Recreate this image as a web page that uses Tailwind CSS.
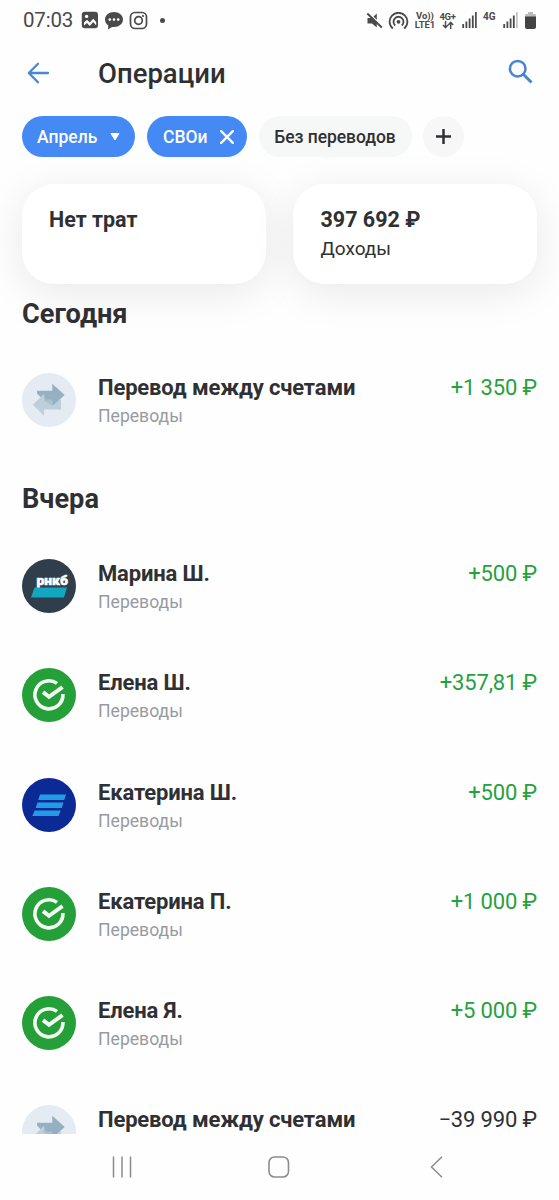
<!DOCTYPE html>
<html lang="ru">
<head>
<meta charset="utf-8">
<title>Операции</title>
<script src="https://cdn.jsdelivr.net/npm/@tailwindcss/browser@4"></script>
</head>
<body class="bg-[#fefefe] font-['Roboto',sans-serif] text-[#2f3033]">
<svg class="hidden">
  <symbol id="transfer" viewBox="0 0 54 54">
    <circle cx="27" cy="27" r="27" fill="#e4ebf3"/>
    <path d="M10.800 31.700L22 21V26.500H39V36.500H22V42.700Z" fill="#bccfda"/>
    <path d="M15 17.700H30.300V10.700L42.700 22L30.300 33V28H22V21L18.500 24.300L15 20.500Z" fill="#94b0c1"/>
    <path d="M22 21.500L24 26.500H30.300V33L24 28.500H22Z" fill="#a9c0cd"/>
  </symbol>
  <symbol id="sber" viewBox="0 0 54 54">
    <circle cx="27" cy="27" r="27" fill="#259f38"/>
    <path d="M35 15.400A14 14 0 1 0 40.900 26" fill="none" stroke="#f2fff2" stroke-width="3.600"/>
    <path d="M21 24.200L27 28.800L40.500 19.200" fill="none" stroke="#f2fff2" stroke-width="4"/>
  </symbol>
  <symbol id="signal" viewBox="0 0 15 16">
    <path d="M1.200 12v4M4.400 9.500V16M7.600 6.500V16M10.800 3.500V16" stroke="#4a4a4a" stroke-width="1.800"/>
  </symbol>
</svg>
<div class="flex h-[1200px] w-[559px] flex-col overflow-hidden">
  <header class="flex h-[40px] shrink-0 items-center pl-[23px] pr-[23px] text-[#4a4a4a]">
    <span class="w-[51px] whitespace-nowrap text-[20.500px] leading-6 tracking-[-0.200px]">07:03</span>
    <svg class="ml-[7px] size-[18px]" viewBox="0 0 18 18"><rect x=".8" y=".8" width="16.200" height="16.400" rx="3" fill="#4a4a4a"/><circle cx="5.600" cy="5.400" r="1.700" fill="#fff"/><path d="M3 14.500V11.500L6 8.800L8.700 11.500L12.200 7.700L15.200 11V14.500L12.200 11L8.700 15L6 12Z" fill="#fff"/></svg>
    <svg class="ml-[5px] h-[19px] w-[20px]" viewBox="0 0 20 19"><path d="M10 1C15 1 19 4.200 19 8.500S15 16 10 16Q8.500 16 8 15.900L4 18.500L4.300 14.500C2.200 13.200 1 11 1 8.500C1 4.200 5 1 10 1Z" fill="#4a4a4a"/><g fill="#fff"><circle cx="5.800" cy="8.600" r="1.300"/><circle cx="10" cy="8.600" r="1.300"/><circle cx="14.200" cy="8.600" r="1.300"/></g></svg>
    <svg class="ml-[5px] size-[19px]" viewBox="0 0 19 19" fill="none" stroke="#4a4a4a"><rect x="1.500" y="1.500" width="16" height="16" rx="4.500" stroke-width="1.700"/><circle cx="9.500" cy="9.500" r="3.800" stroke-width="1.700"/><circle cx="14" cy="5" r="1.100" fill="#4a4a4a" stroke="none"/></svg>
    <span class="ml-[12px] size-[5px] rounded-full bg-[#4a4a4a]"></span>
    <svg class="ml-auto h-[17px] w-[17px]" viewBox="0 0 17 17"><path d="M1.500 6H6L10.800 1.500V15.500L6 11.500H1.500Z" fill="#4a4a4a"/><path d="M2.300 .8L16 14" stroke="#fff" stroke-width="1.800"/><path d="M1.300 1.500L15.800 15.500" stroke="#4a4a4a" stroke-width="1.900"/></svg>
    <svg class="ml-[5px] mt-px h-[18px] w-[21px]" viewBox="0 0 21 18" fill="none" stroke="#4a4a4a" stroke-width="1.800"><path d="M4.800 16.500A8.900 8.900 0 1 1 16.200 16.500"/><path d="M7.200 13.500A5 5 0 1 1 13.800 13.500"/><circle cx="10.500" cy="9.800" r="1.900" fill="#4a4a4a" stroke="none"/></svg>
    <div class="ml-[5px] flex w-[22px] flex-col items-center whitespace-nowrap text-[9.500px] font-bold leading-[9px] tracking-[-0.050px]"><span>Vo))</span><span>LTE1</span></div>
    <div class="ml-[3px] flex w-[17px] flex-col items-center whitespace-nowrap text-[9.500px] font-bold leading-[9px] tracking-[-0.300px]"><span>4G+</span><svg class="h-[8px] w-[12px]" viewBox="0 0 12 8" fill="none" stroke="#4a4a4a" stroke-width="1.400"><path d="M3.500 0V6.500M1 4L3.500 6.700L6 4M8.700 8V1.500M6.200 4L8.700 1.300L11.200 4"/></svg></div>
    <svg class="ml-[6px] h-[16px] w-[15px]" viewBox="0 0 15 16"><use href="#signal"/><path d="M13.900 0V16" stroke="#4a4a4a" stroke-width="1.700"/></svg>
    <span class="-mt-[7px] ml-[6px] w-[13px] text-[10px] font-bold leading-3">4G</span>
    <svg class="ml-[7px] h-[16px] w-[15px]" viewBox="0 0 15 16"><use href="#signal"/><path d="M13.900 0V16" stroke="#c4c4c4" stroke-width="1.700"/></svg>
    <svg class="ml-[7px] h-[17px] w-[11px]" viewBox="0 0 11 17"><path d="M3 0H8V2H10Q11 2 11 4V6H0V4Q0 2 1 2H3Z" fill="#bbb"/><path d="M0 4.500H11V15Q11 17 9 17H2Q0 17 0 15Z" fill="#444"/></svg>
  </header>

  <div class="flex h-[68px] shrink-0 items-center pl-[27px] pr-[26px]">
    <svg class="mt-[-3px] h-[22px] w-[23px]" viewBox="0 0 23 22" fill="none" stroke="#4a86d2" stroke-width="2.300" stroke-linecap="round" stroke-linejoin="round"><path d="M21 11H2M11 1.700L1.800 11L11 20.300"/></svg>
    <h1 class="ml-[48px] text-[27.500px] font-medium leading-8">Операции</h1>
    <svg class="ml-auto mt-[-5px] size-[25px]" viewBox="0 0 25 25" fill="none" stroke="#4a84cf"><circle cx="9.700" cy="9.700" r="7.800" stroke-width="2.500"/><path d="M15.300 15.300L23.500 23.500" stroke-width="3"/></svg>
  </div>

  <div class="mt-[8px] flex h-[41px] shrink-0 pl-[22px] text-[17.500px] font-medium">
    <div class="flex w-[113px] items-center rounded-full bg-[#4489f4] pl-[15px] pt-px text-white">Апрель<svg class="ml-[13px] h-[8px] w-[10px]" viewBox="0 0 10 8"><path d="M1 .5H9L5 7Z" fill="#fff" stroke="#fff" stroke-linejoin="round"/></svg></div>
    <div class="ml-[11.500px] flex w-[100.500px] items-center rounded-full bg-[#4489f4] pl-[16.500px] pt-px text-white">СВОи<svg class="ml-[12px] size-[14px]" viewBox="0 0 14 14"><path d="M1.200 1.200L12.800 12.800M12.800 1.200L1.200 12.800" stroke="#fff" stroke-width="2.400" stroke-linecap="round"/></svg></div>
    <div class="ml-[11.500px] flex w-[153px] items-center justify-center whitespace-nowrap rounded-full bg-[#f6f8f8] pt-px tracking-[-0.060px]">Без переводов</div>
    <div class="ml-[11px] flex w-[41px] items-center justify-center rounded-full bg-[#f7f7f7]"><svg class="size-[15px]" viewBox="0 0 15 15"><path d="M7.500 .5V14.500M.5 7.500H14.500" stroke="#2f3033" stroke-width="2.500" stroke-linecap="round"/></svg></div>
  </div>

  <section class="mt-[27px] flex shrink-0 gap-[27px] px-[22px]">
    <div class="h-[100px] w-[244px] rounded-[32px] bg-white pl-[27px] pt-[23px] shadow-[0_8px_44px_rgba(0,0,0,0.09)]"><p class="text-[21.500px] font-bold leading-[26px]">Нет трат</p></div>
    <div class="h-[100px] w-[244px] rounded-[32px] bg-white pl-[27.500px] pt-[23px] shadow-[0_8px_44px_rgba(0,0,0,0.09)]"><p class="text-[21.500px] font-bold leading-[26px]">397 692 ₽</p><p class="mt-[3px] text-[19px] leading-[26px]">Доходы</p></div>
  </section>

  <main class="flex h-[850px] shrink-0 flex-col overflow-hidden px-[22px]">
    <h2 class="mt-[13px] pt-px text-[27.200px] font-bold leading-8">Сегодня</h2>
    <div class="mt-[43px] flex h-[54px] shrink-0">
      <svg class="size-[54px]"><use href="#transfer"/></svg>
      <div class="ml-[22px]"><p class="text-[22px] font-bold leading-[30px] tracking-[-0.150px]">Перевод между счетами</p><p class="text-[17.600px] leading-[26px] text-[#979ba1]">Переводы</p></div>
      <p class="ml-auto text-[22px] leading-[30px] tracking-[-0.150px] text-[#27a03e]">+1 350 ₽</p>
    </div>
    <h2 class="mt-[55px] pt-px text-[27.200px] font-bold leading-8">Вчера</h2>
    <div class="mt-[44px] flex flex-col gap-[55.300px]">
      <div class="flex h-[54px] shrink-0">
        <svg class="size-[54px]" viewBox="0 0 54 54"><circle cx="27" cy="27" r="27" fill="#303d4a"/><text x="14.500" y="26" textLength="31.500" lengthAdjust="spacingAndGlyphs" font-family="Roboto" font-size="13" font-weight="900" fill="#fff" stroke="#fff" stroke-width=".5">рнкб</text><path d="M12.500 28.500H45L42 38.500H9Z" fill="#12a6c0"/></svg>
        <div class="ml-[22px]"><p class="text-[22px] font-bold leading-[30px] tracking-[-0.150px]">Марина Ш.</p><p class="text-[17.600px] leading-[26px] text-[#979ba1]">Переводы</p></div>
        <p class="ml-auto text-[22px] leading-[30px] tracking-[-0.150px] text-[#27a03e]">+500 ₽</p>
      </div>
      <div class="flex h-[54px] shrink-0">
        <svg class="size-[54px]"><use href="#sber"/></svg>
        <div class="ml-[22px]"><p class="text-[22px] font-bold leading-[30px] tracking-[-0.150px]">Елена Ш.</p><p class="text-[17.600px] leading-[26px] text-[#979ba1]">Переводы</p></div>
        <p class="ml-auto text-[22px] leading-[30px] tracking-[-0.150px] text-[#27a03e]">+357,81 ₽</p>
      </div>
      <div class="flex h-[54px] shrink-0">
        <svg class="size-[54px]" viewBox="0 0 54 54"><circle cx="27" cy="27" r="27" fill="#0b2a96"/><path d="M18 16.500H44L42.200 22H16.200ZM15.500 24.500H41.500L39.700 30H13.700ZM12.700 32.500H38.700L36.500 38H10.300Z" fill="#239be6"/></svg>
        <div class="ml-[22px]"><p class="text-[22px] font-bold leading-[30px] tracking-[-0.150px]">Екатерина Ш.</p><p class="text-[17.600px] leading-[26px] text-[#979ba1]">Переводы</p></div>
        <p class="ml-auto text-[22px] leading-[30px] tracking-[-0.150px] text-[#27a03e]">+500 ₽</p>
      </div>
      <div class="flex h-[54px] shrink-0">
        <svg class="size-[54px]"><use href="#sber"/></svg>
        <div class="ml-[22px]"><p class="text-[22px] font-bold leading-[30px] tracking-[-0.150px]">Екатерина П.</p><p class="text-[17.600px] leading-[26px] text-[#979ba1]">Переводы</p></div>
        <p class="ml-auto text-[22px] leading-[30px] tracking-[-0.150px] text-[#27a03e]">+1 000 ₽</p>
      </div>
      <div class="flex h-[54px] shrink-0">
        <svg class="size-[54px]"><use href="#sber"/></svg>
        <div class="ml-[22px]"><p class="text-[22px] font-bold leading-[30px] tracking-[-0.150px]">Елена Я.</p><p class="text-[17.600px] leading-[26px] text-[#979ba1]">Переводы</p></div>
        <p class="ml-auto text-[22px] leading-[30px] tracking-[-0.150px] text-[#27a03e]">+5 000 ₽</p>
      </div>
      <div class="flex h-[30px] shrink-0 overflow-hidden">
        <svg class="size-[54px] shrink-0"><use href="#transfer"/></svg>
        <div class="ml-[22px]"><p class="text-[22px] font-bold leading-[30px] tracking-[-0.150px]">Перевод между счетами</p></div>
        <p class="ml-auto text-[22px] leading-[30px] tracking-[-0.150px]">−39 990 ₽</p>
      </div>
    </div>
  </main>

  <nav class="flex flex-1 items-center pl-[112px] pr-[116px]">
    <svg class="h-[22px] w-[20px]" viewBox="0 0 20 22"><path d="M1.500 .5V21.500M10 .5V21.500M18.500 .5V21.500" stroke="#8c8c8c" stroke-width="1.500"/></svg>
    <svg class="ml-[136px] size-[22px]" viewBox="0 0 22 22"><rect x="1" y="1" width="19.500" height="20" rx="5.500" fill="none" stroke="#8c8c8c" stroke-width="1.600"/></svg>
    <svg class="ml-auto h-[22px] w-[13px]" viewBox="0 0 13 22"><path d="M12 .7L1.500 11L12 21.300" fill="none" stroke="#8c8c8c" stroke-width="1.500"/></svg>
  </nav>
</div>
</body>
</html>
